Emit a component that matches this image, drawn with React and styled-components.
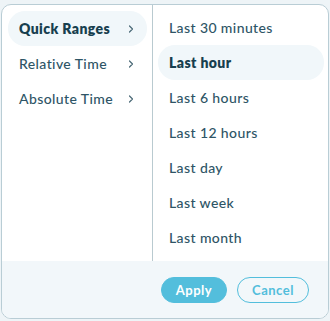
import React from "react";
import styled, { createGlobalStyle } from "styled-components";

const Global = createGlobalStyle`
  html, body { margin: 0; padding: 0; background: #eef4f7; }
  body { font-family: Lato, "Noto Sans", sans-serif; }
`;

const Card = styled.div`
  box-sizing: border-box;
  margin: 4px 0 0 1px;
  width: 328px;
  height: 315px;
  background: #ffffff;
  border: 1px solid #b9cdd5;
  border-radius: 10px;
  overflow: hidden;
  display: flex;
  flex-direction: column;
`;

const Body = styled.div`
  display: flex;
  height: 256px;
`;

const LeftCol = styled.div`
  width: 151px;
  box-sizing: border-box;
  padding: 6px 5px 0 6px;
  border-right: 1px solid #b9cad0;
  display: flex;
  flex-direction: column;
`;

const RightCol = styled.div`
  flex: 1;
  box-sizing: border-box;
  padding: 5px 4px 0 5px;
  display: flex;
  flex-direction: column;
`;

const Item = styled.div`
  height: 35px;
  box-sizing: border-box;
  display: flex;
  align-items: center;
  justify-content: space-between;
  padding: 0 12px 0 ${(p) => p.$pl}px;
  border-radius: 17px;
  font-size: 14px;
  letter-spacing: 0.4px;
  color: ${(p) => (p.$active ? "#173f4f" : "#2e5566")};
  font-weight: ${(p) => (p.$active ? 800 : 500)};
  background: ${(p) => (p.$active ? "#f1f7fa" : "transparent")};
`;

const Footer = styled.div`
  flex: 1;
  background: #f2f7fa;
  display: flex;
  align-items: center;
  justify-content: flex-end;
  gap: 10px;
  padding: 0 19px 0 0;
`;

const Button = styled.button`
  box-sizing: border-box;
  height: 26px;
  width: ${(p) => p.$w}px;
  border-radius: 13px;
  border: 1px solid #53bedc;
  background: ${(p) => (p.$primary ? "#53bedc" : "transparent")};
  color: ${(p) => (p.$primary ? "#ffffff" : "#53bedc")};
  font-family: Lato, "Noto Sans", sans-serif;
  font-size: 13px;
  font-weight: 700;
  letter-spacing: 0.5px;
  padding: 0;
`;

const Chevron = () => (
  <svg width="8" height="10" viewBox="0 0 8 10">
    <path d="M2.5 2 L5.5 5 L2.5 8" fill="none" stroke="#4a6976" strokeWidth="1.2" strokeLinecap="round" strokeLinejoin="round" />
  </svg>
);

const left = ["Quick Ranges", "Relative Time", "Absolute Time"];
const right = ["Last 30 minutes", "Last hour", "Last 6 hours", "Last 12 hours", "Last day", "Last week", "Last month"];

export default function App() {
  return (
    <>
      <Global />
      <Card>
        <Body>
          <LeftCol>
            {left.map((t, i) => (
              <Item key={t} $pl={11} $active={i === 0}>
                <span>{t}</span>
                <Chevron />
              </Item>
            ))}
          </LeftCol>
          <RightCol>
            {right.map((t, i) => (
              <Item key={t} $pl={11} $active={i === 1}>
                <span>{t}</span>
              </Item>
            ))}
          </RightCol>
        </Body>
        <Footer>
          <Button $primary $w={66}>Apply</Button>
          <Button $w={72}>Cancel</Button>
        </Footer>
      </Card>
    </>
  );
}
